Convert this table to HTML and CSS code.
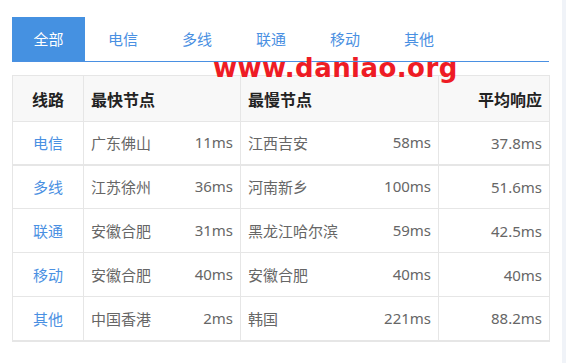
FILE: index.html
```html
<!DOCTYPE html>
<html lang="zh-CN">
<head>
<meta charset="utf-8">
<title>线路测速</title>
<link rel="stylesheet" href="styles.css">
</head>
<body>
<div class="page">
  <main class="main">
    <nav class="tabs">
      <span class="tab active">全部</span>
      <span class="tab">电信</span>
      <span class="tab">多线</span>
      <span class="tab">联通</span>
      <span class="tab">移动</span>
      <span class="tab">其他</span>
    </nav>
    <table class="speed">
      <colgroup>
        <col class="c1"><col class="c2"><col class="c3"><col class="c4">
      </colgroup>
      <thead>
        <tr>
          <th class="center">线路</th>
          <th>最快节点</th>
          <th>最慢节点</th>
          <th class="right">平均响应</th>
        </tr>
      </thead>
      <tbody>
        <tr class="first">
          <td class="center link">电信</td>
          <td><div class="split"><span>广东佛山</span><span>11ms</span></div></td>
          <td><div class="split"><span>江西吉安</span><span>58ms</span></div></td>
          <td class="right">37.8ms</td>
        </tr>
        <tr>
          <td class="center link">多线</td>
          <td><div class="split"><span>江苏徐州</span><span>36ms</span></div></td>
          <td><div class="split"><span>河南新乡</span><span>100ms</span></div></td>
          <td class="right">51.6ms</td>
        </tr>
        <tr>
          <td class="center link">联通</td>
          <td><div class="split"><span>安徽合肥</span><span>31ms</span></div></td>
          <td><div class="split"><span>黑龙江哈尔滨</span><span>59ms</span></div></td>
          <td class="right">42.5ms</td>
        </tr>
        <tr>
          <td class="center link">移动</td>
          <td><div class="split"><span>安徽合肥</span><span>40ms</span></div></td>
          <td><div class="split"><span>安徽合肥</span><span>40ms</span></div></td>
          <td class="right">40ms</td>
        </tr>
        <tr class="last">
          <td class="center link">其他</td>
          <td><div class="split"><span>中国香港</span><span>2ms</span></div></td>
          <td><div class="split"><span>韩国</span><span>221ms</span></div></td>
          <td class="right">88.2ms</td>
        </tr>
      </tbody>
    </table>
    <div class="watermark">www.daniao.org</div>
  </main>
  <aside class="side"></aside>
</div>
</body>
</html>
```

FILE: styles.css
```css
* { box-sizing: border-box; }
html, body { margin: 0; padding: 0; background: #fff; }
body {
  font-family: "Noto Sans", "Noto Sans CJK SC", sans-serif;
  font-size: 15px;
  color: #666;
}
.page {
  display: flex;
  width: 566px;
  height: 363px;
  overflow: hidden;
}
.main {
  position: relative;
  width: 562px;
  padding: 17px 0 0 12px;
}
.side {
  flex: 1;
  background: #f0f3f8;
}
.tabs {
  display: flex;
  width: 537px;
  border-bottom: 1px solid #4a90e2;
}
.tab {
  width: 74px;
  height: 44px;
  line-height: 44px;
  text-align: center;
  color: #4a90e2;
  font-size: 15px;
}
.tab.active {
  width: 73px;
  margin-right: 1px;
  background: #4591e1;
  color: #fff;
}
.speed {
  margin-top: 13px;
  width: 537px;
  border-collapse: collapse;
  table-layout: fixed;
  border: 1px solid #e6e6e6;
  border-bottom: 2px solid #e6e6e6;
}
.c1 { width: 71px; }
.c2 { width: 157px; }
.c3 { width: 198px; }
.c4 { width: 111px; }
.speed th, .speed td {
  border: 1px solid #e6e6e6;
  padding: 0 7px;
  text-align: left;
}
.speed th {
  height: 46px;
  background: #f8f8f8;
  color: #222;
  font-weight: bold;
  font-size: 16px;
}
.speed td {
  height: 44px;
  color: #666;
}
.speed tr.first td { height: 43px; border-bottom: 2px solid #e6e6e6; }
.speed .center { text-align: center; }
.speed .right { text-align: right; }
.speed td.link { color: #4a90e2; }
.split {
  display: flex;
  justify-content: space-between;
}
.watermark {
  position: absolute;
  left: 213px;
  top: 55px;
  font-family: "DejaVu Sans", sans-serif;
  font-weight: bold;
  font-size: 26px;
  line-height: 26px;
  letter-spacing: 0.45px;
  color: #ee1c25;
  white-space: nowrap;
}
```
